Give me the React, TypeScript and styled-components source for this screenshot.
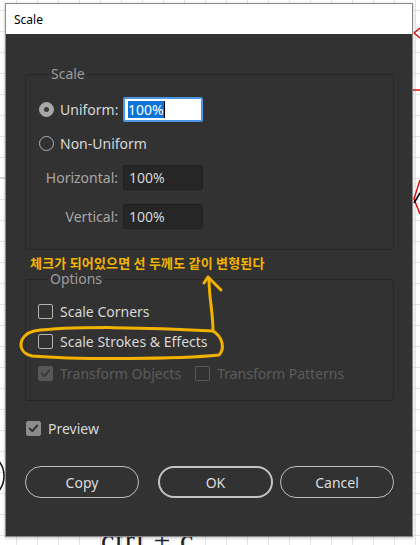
import React from "react";
import styled, { createGlobalStyle } from "styled-components";

const Global = createGlobalStyle`
  html, body { margin: 0; padding: 0; }
  body {
    width: 420px;
    height: 545px;
    overflow: hidden;
    background-color: #ffffff;
    background-image:
      linear-gradient(to right, #e4e4e4 1px, transparent 1px),
      linear-gradient(to bottom, #e4e4e4 1px, transparent 1px);
    background-size: 21px 21px;
    background-position: 16px 10px;
    font-family: "Noto Sans", "Open Sans", sans-serif;
  }
`;

const Canvas = styled.div`
  position: relative;
  width: 420px;
  height: 545px;
  overflow: hidden;
`;

const BackdropText = styled.div`
  position: absolute;
  left: 101px;
  top: 523px;
  font-family: "Liberation Serif", serif;
  font-size: 30px;
  color: #222;
  letter-spacing: 1px;
`;

const Backdrop = styled.svg`
  position: absolute;
  left: 0;
  top: 0;
`;

const Overlay = styled.svg`
  position: absolute;
  left: 0;
  top: 0;
  pointer-events: none;
  z-index: 3;
`;

const Dialog = styled.div`
  position: relative;
  z-index: 2;
  margin: 3px 0 0 5px;
  width: 406px;
  height: 532px;
  border: 1px solid #8a8a8a;
  background: #323232;
  display: flex;
  flex-direction: column;
  box-shadow: 0 1px 3px rgba(0, 0, 0, 0.25);
`;

const TitleBar = styled.div`
  height: 30px;
  background: #ffffff;
  display: flex;
  align-items: center;
  padding-left: 8px;
  font-family: "Noto Sans", sans-serif;
  font-size: 12px;
  color: #000;
`;

const Body = styled.div`
  flex: 1;
  padding: 31px 18px 0 19px;
  display: flex;
  flex-direction: column;
  color: #d8d8d8;
  font-size: 14px;
`;

const Group = styled.fieldset<{ $pad: string }>`
  margin: 0;
  border: 1px solid #272727;
  border-radius: 3px;
  padding: ${(p) => p.$pad};
  display: flex;
  flex-direction: column;
  min-width: 0;
`;

const Legend = styled.legend`
  margin-left: 10px;
  padding: 0 2px;
  font-size: 14px;
  line-height: 18px;
  color: #9c9c9c;
`;

const FieldRow = styled.div<{ $mt: number }>`
  display: grid;
  grid-template-columns: 79px 80px;
  column-gap: 5px;
  align-items: center;
  height: 25px;
  margin-top: ${(p) => p.$mt}px;
`;

const RadioLabel = styled.label`
  display: flex;
  align-items: center;
  gap: 6px;
  white-space: nowrap;
  color: #d8d8d8;
`;

const RadioDot = styled.span<{ $on?: boolean }>`
  box-sizing: border-box;
  width: 15px;
  height: 15px;
  border-radius: 50%;
  flex: none;
  border: 1.5px solid ${(p) => (p.$on ? "#a8a8a8" : "#b0b0b0")};
  background: ${(p) => (p.$on ? "#a8a8a8" : "transparent")};
  display: flex;
  align-items: center;
  justify-content: center;
  &::after {
    content: "";
    width: 5px;
    height: 5px;
    border-radius: 50%;
    background: ${(p) => (p.$on ? "#3a3a3a" : "transparent")};
  }
`;

const SideLabel = styled.span`
  text-align: right;
  color: #a8a8a8;
  white-space: nowrap;
`;

const FocusInput = styled.div`
  box-sizing: border-box;
  height: 25px;
  background: #ffffff;
  border: 2px solid #4b97e6;
  border-radius: 2px;
  display: flex;
  align-items: center;
  padding-left: 3px;
`;

const Selected = styled.span`
  background: #0a74d8;
  color: #ffffff;
  font-size: 14px;
  line-height: 17px;
  border-right: 1px solid #000;
`;

const DarkInput = styled.div`
  box-sizing: border-box;
  height: 25px;
  background: #262626;
  border: 1px solid #1f1f1f;
  border-radius: 3px;
  display: flex;
  align-items: center;
  padding-left: 5px;
  color: #d6d6d6;
`;

const Annotation = styled.div`
  padding: 6px 0 0 5px;
  height: 14px;
  line-height: 14px;
  font-family: "Noto Sans CJK KR", sans-serif;
  font-weight: 700;
  font-size: 13px;
  color: #f4b400;
  letter-spacing: 0.2px;
`;

const CheckRow = styled.label<{ $mt: number; $dim?: boolean }>`
  display: flex;
  align-items: center;
  height: 20px;
  margin-top: ${(p) => p.$mt}px;
  color: ${(p) => (p.$dim ? "#5c5c5c" : "#d8d8d8")};
  white-space: nowrap;
`;

const Box = styled.span<{ $on?: boolean; $dim?: boolean }>`
  box-sizing: border-box;
  width: 15px;
  height: 15px;
  flex: none;
  border-radius: 2px;
  margin-right: 7px;
  border: 1px solid ${(p) => (p.$dim ? "#575757" : p.$on ? "#8c8c8c" : "#b4b4b4")};
  background: ${(p) => (p.$on ? (p.$dim ? "#575757" : "#8c8c8c") : "transparent")};
  display: flex;
  align-items: center;
  justify-content: center;
`;

const Gap = styled.span<{ $w: number }>`
  width: ${(p) => p.$w}px;
  flex: none;
`;

const PreviewRow = styled(CheckRow)`
  margin-left: 1px;
`;

const Buttons = styled.div`
  display: flex;
  margin-top: 28px;
`;

const Button = styled.button<{ $primary?: boolean; $ml: number; $w: number }>`
  box-sizing: border-box;
  width: ${(p) => p.$w}px;
  height: 32px;
  margin-left: ${(p) => p.$ml}px;
  border-radius: 16px;
  border: ${(p) => (p.$primary ? "2px solid #c4c4c4" : "1.5px solid #bdbdbd")};
  background: transparent;
  color: #dcdcdc;
  font-family: "Noto Sans", sans-serif;
  font-size: 14px;
  padding: 0;
`;

const Check = ({ color }: { color: string }) => (
  <svg width="11" height="11" viewBox="0 0 11 11">
    <path d="M1.8 5.6 L4.3 8.1 L9.2 2.6" fill="none" stroke={color} strokeWidth="2" strokeLinecap="round" strokeLinejoin="round" />
  </svg>
);

export default function App() {
  return (
    <Canvas>
      <Global />
      <Backdrop width="420" height="545" viewBox="0 0 420 545">
        <path d="M414 33 L420 28 M414 33 L420 38" stroke="#e01010" strokeWidth="1.5" fill="none" />
        <path d="M413 90 L420 90" stroke="#e01010" strokeWidth="1.5" />
        <path d="M420 180 L414 199 L420 214" stroke="#e01010" strokeWidth="1.5" fill="none" />
        <path d="M414 203 L420 193" stroke="#000" strokeWidth="1.5" />
        <ellipse cx="-20" cy="476" rx="24" ry="24" fill="none" stroke="#111" strokeWidth="1.5" />
        <line x1="0" y1="178" x2="5" y2="178" stroke="#bbb" strokeWidth="1" />
      </Backdrop>
      <BackdropText>ctrl + c</BackdropText>
      <Dialog>
        <TitleBar>Scale</TitleBar>
        <Body>
          <Group $pad="14px 0 20px 13px">
            <Legend>Scale</Legend>
            <FieldRow $mt={0}>
              <RadioLabel>
                <RadioDot $on />
                Uniform:
              </RadioLabel>
              <FocusInput>
                <Selected>100%</Selected>
              </FocusInput>
            </FieldRow>
            <FieldRow $mt={9}>
              <RadioLabel>
                <RadioDot />
                Non-Uniform
              </RadioLabel>
            </FieldRow>
            <FieldRow $mt={9}>
              <SideLabel>Horizontal:</SideLabel>
              <DarkInput>100%</DarkInput>
            </FieldRow>
            <FieldRow $mt={14}>
              <SideLabel>Vertical:</SideLabel>
              <DarkInput>100%</DarkInput>
            </FieldRow>
          </Group>
          <Annotation>체크가 되어있으면 선 두께도 같이 변형된다</Annotation>
          <Group $pad="13px 0 17px 12px">
            <Legend>Options</Legend>
            <CheckRow $mt={0}>
              <Box />
              Scale Corners
            </CheckRow>
            <CheckRow $mt={10}>
              <Box />
              Scale Strokes &amp; Effects
            </CheckRow>
            <CheckRow $mt={12} $dim>
              <Box $on $dim>
                <Check color="#3a3a3a" />
              </Box>
              Transform Objects
              <Gap $w={14} />
              <Box $dim />
              Transform Patterns
            </CheckRow>
          </Group>
          <PreviewRow $mt={17}>
            <Box $on>
              <Check color="#2e2e2e" />
            </Box>
            Preview
          </PreviewRow>
          <Buttons>
            <Button $ml={0} $w={114}>Copy</Button>
            <Button $ml={19} $w={115} $primary>OK</Button>
            <Button $ml={7} $w={114}>Cancel</Button>
          </Buttons>
        </Body>
      </Dialog>
      <Overlay width="420" height="545" viewBox="0 0 420 545">
        <g fill="none" stroke="#f2b200" strokeWidth="3" strokeLinecap="round" strokeLinejoin="round">
          <path d="M213 331 C150 327 70 326 34 331 C18 335 16 352 32 356 C80 360 180 359 219 355 C225 349 223 337 213 331" />
          <path d="M213 331 C213 312 209 298 209 279" />
          <path d="M204 283 L208 277 L221 290" />
        </g>
      </Overlay>
    </Canvas>
  );
}
